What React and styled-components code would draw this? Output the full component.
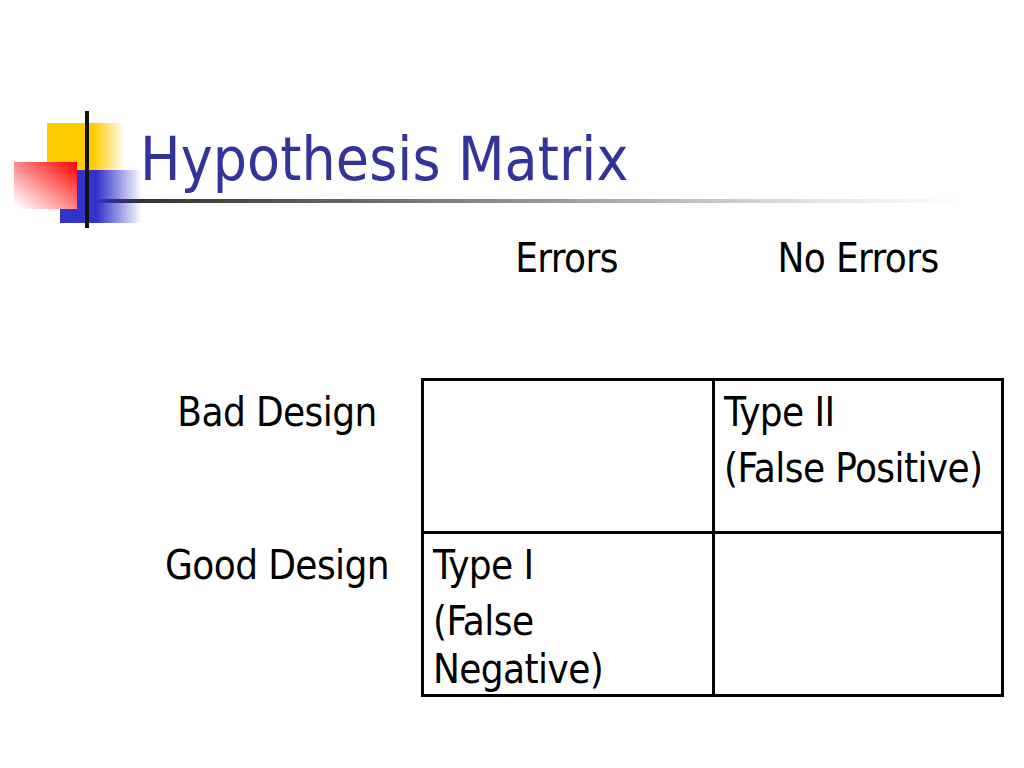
import React from "react";
import styled, { createGlobalStyle } from "styled-components";

const Global = createGlobalStyle`
  html, body { margin: 0; padding: 0; background: #ffffff; }
  body { font-family: "DejaVu Sans Condensed", "DejaVu Sans", Verdana, sans-serif; font-stretch: condensed; }
`;

const Slide = styled.div`
  position: relative;
  width: 1024px;
  height: 768px;
  overflow: hidden;
  background: #fff;
  color: #000;
`;

const Header = styled.header`
  padding-top: 129px;
`;

const Title = styled.h1`
  margin: 0 0 0 140px;
  font-size: 60px;
  line-height: 60px;
  font-weight: normal;
  color: #333399;
  letter-spacing: 0.1px;
`;

const Rule = styled.div`
  margin: 10px 0 0 49px;
  width: 916px;
  height: 4px;
  background: linear-gradient(to right, #1c1c1c 0%, #555 25%, #9a9a9a 55%, #e6e6e6 85%, #ffffff 100%);
`;

const Logo = styled.svg`
  position: absolute;
  left: 0;
  top: 100px;
`;

const Matrix = styled.section`
  display: grid;
  grid-template-columns: 275px 291px 292px;
  grid-template-rows: 144px 153px 166px;
  margin: 31px 0 0 146px;
  font-size: 40px;
  line-height: 48px;
  letter-spacing: -0.6px;
`;

const ColHead = styled.div`
  text-align: center;
`;

const RowHead = styled.div`
  padding: 10px 13px 0 0;
  text-align: center;
`;

const Cell = styled.div`
  border-top: 3px solid #000;
  border-left: 3px solid #000;
  border-right: ${(p) => (p.$right ? "3px solid #000" : "none")};
  border-bottom: ${(p) => (p.$bottom ? "3px solid #000" : "none")};
  padding: 7px 6px 0 9px;
`;

const Para = styled.p`
  margin: 0 0 8px 0;
`;

function HeaderLogo() {
  return (
    <Logo width="150" height="135" viewBox="0 100 150 135">
      <defs>
        <linearGradient id="yel" x1="0" y1="0" x2="1" y2="0">
          <stop offset="0" stopColor="#ffcc00" />
          <stop offset="0.6" stopColor="#ffcc00" />
          <stop offset="1" stopColor="#ffcc00" stopOpacity="0" />
        </linearGradient>
        <linearGradient id="blu" x1="0" y1="0" x2="1" y2="0">
          <stop offset="0" stopColor="#3333cc" />
          <stop offset="0.45" stopColor="#3333cc" />
          <stop offset="1" stopColor="#3333cc" stopOpacity="0" />
        </linearGradient>
        <linearGradient id="red" x1="1" y1="0" x2="0" y2="1">
          <stop offset="0" stopColor="#ff0000" />
          <stop offset="0.95" stopColor="#ffffff" />
        </linearGradient>
      </defs>
      <rect x="47" y="123" width="78" height="47" fill="url(#yel)" />
      <rect x="60" y="170" width="82" height="53" fill="url(#blu)" />
      <rect x="14" y="162" width="63" height="47" fill="url(#red)" />
      <rect x="85" y="111" width="4" height="117" fill="#111" />
    </Logo>
  );
}

export default function App() {
  return (
    <Slide>
      <Global />
      <Header>
        <Title>Hypothesis Matrix</Title>
        <Rule />
      </Header>
      <HeaderLogo />
      <Matrix>
        <div />
        <ColHead>Errors</ColHead>
        <ColHead>No Errors</ColHead>

        <RowHead>Bad Design</RowHead>
        <Cell />
        <Cell $right>
          <Para>Type II</Para>
          <Para>(False Positive)</Para>
        </Cell>

        <RowHead>Good Design</RowHead>
        <Cell $bottom>
          <Para>Type I</Para>
          <Para>(False Negative)</Para>
        </Cell>
        <Cell $right $bottom />
      </Matrix>
    </Slide>
  );
}
